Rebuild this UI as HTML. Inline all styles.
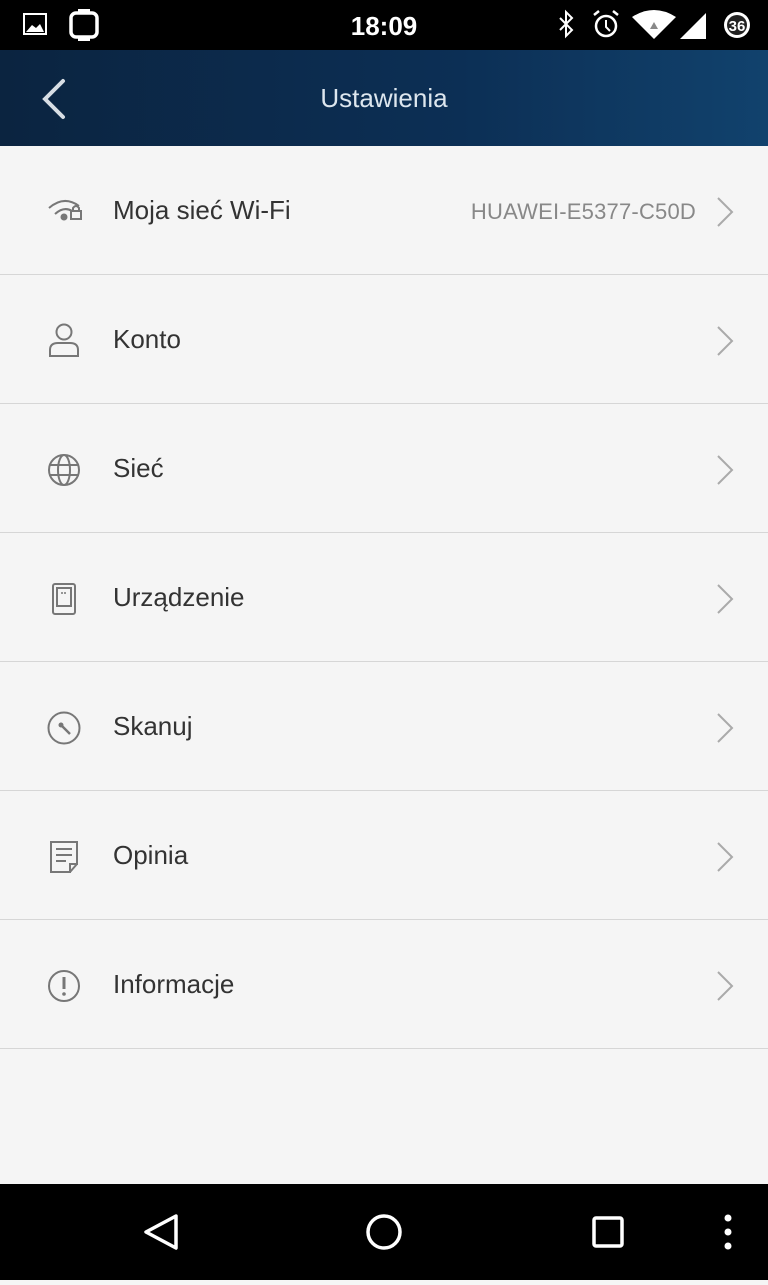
<!DOCTYPE html>
<html><head><meta charset="utf-8"><style>
*{margin:0;padding:0;box-sizing:border-box}
body{width:768px;height:1280px;background:#f5f5f5;font-family:"Liberation Sans",sans-serif;position:relative;overflow:hidden}
.sb{position:absolute;top:0;left:0;width:768px;height:50px;background:#000;color:#fff}
.hdr{position:absolute;top:50px;left:0;width:768px;height:96px;background:linear-gradient(90deg,#0b2440,#0c2f55 60%,#11426d)}
.hdr .t{position:absolute;left:0;right:0;top:33px;text-align:center;color:#dde6ee;font-size:26px}
.row{position:absolute;left:0;width:768px;height:129px;border-bottom:1px solid #d6d6d6}
.row .ic{position:absolute;left:46px;top:48px}
.row .lb{position:absolute;left:113px;top:49px;font-size:26px;color:#333}
.row .ch{position:absolute;left:714px;top:50px}
.row .v{position:absolute;right:72px;top:53px;font-size:22px;color:#888;letter-spacing:0.2px}
.nav{position:absolute;top:1184px;left:0;width:768px;height:96px;background:#000}
</style></head><body>
<div class="sb">
<svg width="768" height="50" style="position:absolute;left:0;top:0">
<rect x="24" y="14" width="22" height="20" fill="none" stroke="#fff" stroke-width="2"/><path d="M26 32 L32 25 L36 28 L40 24 L44 32Z" fill="#fff"/>
<rect x="71" y="13" width="26" height="24" rx="5" fill="none" stroke="#fff" stroke-width="3.5"/><rect x="78" y="9" width="12" height="4" fill="#fff"/><rect x="78" y="37" width="12" height="4" fill="#fff"/>
<text x="384" y="35" text-anchor="middle" font-family="Liberation Sans" font-weight="bold" font-size="26" fill="#fff">18:09</text>
<path d="M560 18 L572 30 L566 36 L566 12 L572 18 L560 30" fill="none" stroke="#fff" stroke-width="2"/>
<circle cx="606" cy="26" r="10" fill="none" stroke="#fff" stroke-width="2.5"/><path d="M606 20 V27 L610 31" stroke="#fff" stroke-width="2" fill="none"/><path d="M594 15 L599 11 M618 15 L613 11" stroke="#fff" stroke-width="2.5"/>
<path d="M632 17 Q654 3 676 17 L654 39Z" fill="#fff"/><path d="M654 22 L650 29 H658Z" fill="#888"/>
<path d="M706 13 V39 H680Z" fill="#fff"/>
<circle cx="737" cy="25" r="13" fill="#fff"/><circle cx="737" cy="25" r="10" fill="#222"/>
<text x="737" y="31" text-anchor="middle" font-family="Liberation Sans" font-weight="bold" font-size="15" fill="#fff">36</text>
</svg></div>
<div class="hdr"><svg width="40" height="50" style="position:absolute;left:36px;top:25px"><path d="M27 6 L9 24 L27 42" fill="none" stroke="#d8dee4" stroke-width="4" stroke-linecap="round"/></svg><div class="t">Ustawienia</div></div>

<div class="row" style="top:146px;height:129px">
<svg class="ic" width="40" height="34" style="top:48px"><path d="M3 14 Q18 1 33 12" fill="none" stroke="#777" stroke-width="2"/><path d="M9 20 Q18 12 26 17" fill="none" stroke="#777" stroke-width="2"/><circle cx="18" cy="23" r="3.5" fill="#777"/><rect x="25" y="17" width="10" height="8" fill="none" stroke="#777" stroke-width="2"/><path d="M27 17 V14 Q30 10 33 14 V17" fill="none" stroke="#777" stroke-width="2"/></svg>
<div class="lb">Moja sieć Wi-Fi</div><div class="v">HUAWEI-E5377-C50D</div>
<svg class="ch" width="24" height="32"><path d="M4 2 L18 16 L4 30" fill="none" stroke="#aaa" stroke-width="2"/></svg></div>

<div class="row" style="top:275px">
<svg class="ic" width="36" height="36" style="top:47px"><circle cx="18" cy="10" r="7.5" fill="none" stroke="#777" stroke-width="2"/><path d="M4 34 V28 Q4 21 12 21 H24 Q32 21 32 28 V34Z" fill="none" stroke="#777" stroke-width="2"/></svg>
<div class="lb">Konto</div><svg class="ch" width="24" height="32"><path d="M4 2 L18 16 L4 30" fill="none" stroke="#aaa" stroke-width="2"/></svg></div>

<div class="row" style="top:404px">
<svg class="ic" width="36" height="36" style="top:48px"><circle cx="18" cy="18" r="15" fill="none" stroke="#777" stroke-width="2"/><ellipse cx="18" cy="18" rx="6" ry="15" fill="none" stroke="#777" stroke-width="2"/><path d="M3 13 H33 M3 23 H33" stroke="#777" stroke-width="2"/></svg>
<div class="lb">Sieć</div><svg class="ch" width="24" height="32"><path d="M4 2 L18 16 L4 30" fill="none" stroke="#aaa" stroke-width="2"/></svg></div>

<div class="row" style="top:533px">
<svg class="ic" width="36" height="36" style="top:48px"><rect x="7" y="3" width="22" height="30" rx="2" fill="none" stroke="#777" stroke-width="2"/><rect x="11" y="7" width="14" height="18" fill="none" stroke="#777" stroke-width="2"/><path d="M15 12 H21" stroke="#777" stroke-width="1.5" stroke-dasharray="2 1"/></svg>
<div class="lb">Urządzenie</div><svg class="ch" width="24" height="32"><path d="M4 2 L18 16 L4 30" fill="none" stroke="#aaa" stroke-width="2"/></svg></div>

<div class="row" style="top:662px">
<svg class="ic" width="36" height="36" style="top:48px"><circle cx="18" cy="18" r="15.5" fill="none" stroke="#777" stroke-width="2"/><circle cx="15" cy="15" r="2.5" fill="#777"/><path d="M15 15 L24 24" stroke="#777" stroke-width="2.5"/></svg>
<div class="lb">Skanuj</div><svg class="ch" width="24" height="32"><path d="M4 2 L18 16 L4 30" fill="none" stroke="#aaa" stroke-width="2"/></svg></div>

<div class="row" style="top:791px">
<svg class="ic" width="36" height="36" style="top:48px"><path d="M5 3 H31 V25 H24 V33 H5Z M24 33 L31 25" fill="none" stroke="#777" stroke-width="2"/><path d="M10 10 H26 M10 16 H26 M10 22 H20" stroke="#777" stroke-width="2"/></svg>
<div class="lb">Opinia</div><svg class="ch" width="24" height="32"><path d="M4 2 L18 16 L4 30" fill="none" stroke="#aaa" stroke-width="2"/></svg></div>

<div class="row" style="top:920px">
<svg class="ic" width="36" height="36" style="top:48px"><circle cx="18" cy="18" r="15" fill="none" stroke="#777" stroke-width="2"/><path d="M18 9 V21" stroke="#777" stroke-width="3"/><circle cx="18" cy="26" r="1.8" fill="#777"/></svg>
<div class="lb">Informacje</div><svg class="ch" width="24" height="32"><path d="M4 2 L18 16 L4 30" fill="none" stroke="#aaa" stroke-width="2"/></svg></div>

<div class="nav"><svg width="768" height="96">
<path d="M176 32 L146 48 L176 64Z" fill="none" stroke="#fff" stroke-width="3.5" stroke-linejoin="round"/>
<circle cx="384" cy="48" r="16" fill="none" stroke="#fff" stroke-width="3.5"/>
<rect x="594" y="34" width="28" height="28" rx="2" fill="none" stroke="#fff" stroke-width="3.5"/>
<circle cx="728" cy="34" r="3.5" fill="#fff"/><circle cx="728" cy="48" r="3.5" fill="#fff"/><circle cx="728" cy="62" r="3.5" fill="#fff"/>
</svg></div>
</body></html>
